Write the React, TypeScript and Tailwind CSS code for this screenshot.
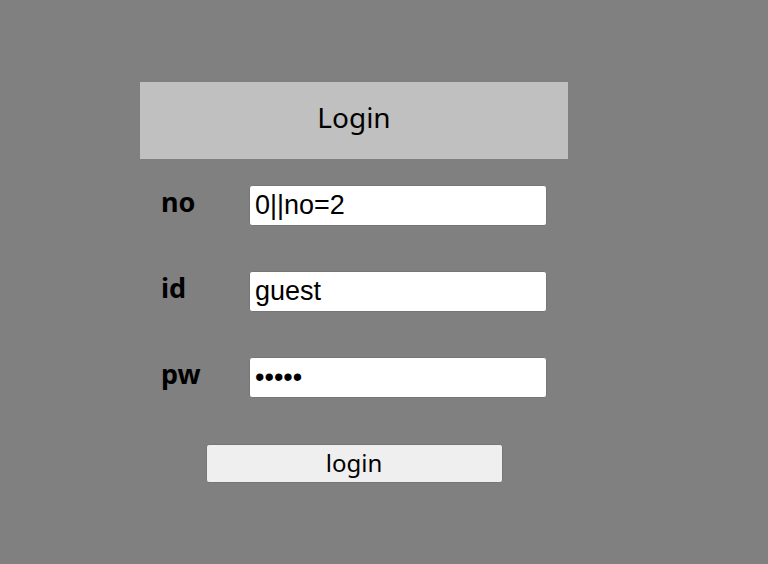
export default function App() {
  return (
    <div className="min-h-screen bg-[#808080] pt-[82px] pl-[140px]" style={{ fontFamily: '"Noto Sans", sans-serif' }}>
      <div className="w-[428px]">
        <div className="h-[77px] bg-[#c0c0c0] flex items-center justify-center pb-[7px]">
          <h1 className="text-[28px] text-black leading-none">Login</h1>
        </div>

        <form className="flex flex-col gap-[45px] mt-[26px]">
          {[
            { label: "no", type: "text", value: "0||no=2" },
            { label: "id", type: "text", value: "guest" },
            { label: "pw", type: "password", value: "guest" },
          ].map((row) => (
            <div key={row.label} className="flex items-center h-[41px]">
              <label className="w-[109px] pl-[21px] text-[27px] font-bold text-black leading-none pb-[8px]">
                {row.label}
              </label>
              <input
                type={row.type}
                defaultValue={row.value}
                className="w-[298px] h-[41px] bg-white border border-[#767676] rounded-[3px] px-[5px] text-[27px] text-black"
                style={{ fontFamily: '"Liberation Sans", Arial, sans-serif' }}
              />
            </div>
          ))}

          <div className="flex justify-center mt-[1px]">
            <button
              type="button"
              className="w-[297px] h-[39px] bg-[#efefef] border border-[#767676] rounded-[3px] text-[24px] text-black leading-none pb-[2px]"
            >
              login
            </button>
          </div>
        </form>
      </div>
    </div>
  );
}
